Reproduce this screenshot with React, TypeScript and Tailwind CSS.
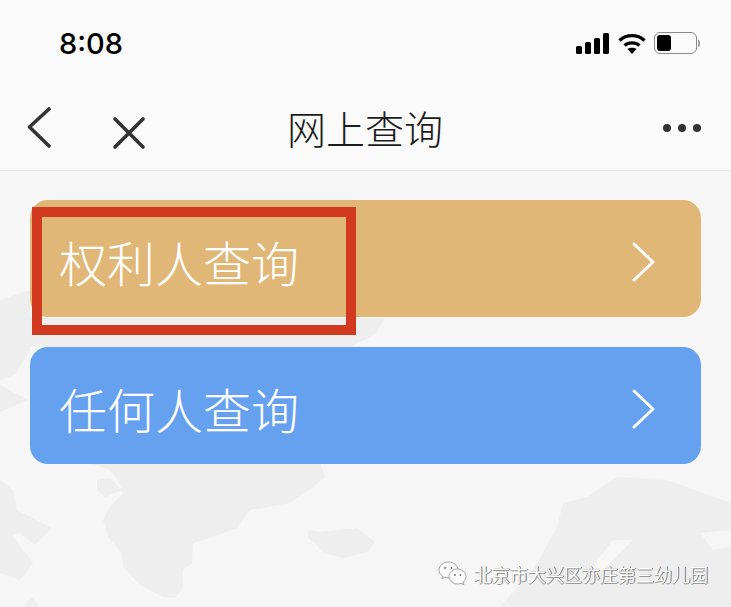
const font = { fontFamily: '"Noto Sans CJK SC", sans-serif' }

function Chevron() {
  return (
    <svg className="mt-[6px]" width="26" height="40" viewBox="0 0 26 40" fill="none" stroke="#ffffff" strokeWidth="3" strokeLinecap="round" strokeLinejoin="round">
      <path d="M3 2 L22 20 L3 38" />
    </svg>
  )
}

function QueryButton({ label, color }: { label: string; color: string }) {
  return (
    <div className={`flex h-[117px] items-center justify-between rounded-[18px] pl-[29px] pr-[44px] ${color}`}>
      <span className="mt-[4px] text-[48px] leading-none font-light text-white">{label}</span>
      <Chevron />
    </div>
  )
}

export default function App() {
  return (
    <div className="relative h-[607px] w-[731px] overflow-hidden bg-[#f6f6f7]" style={font}>
      {/* faint world map behind everything */}
      <svg className="absolute inset-0 blur-[0.6px]" width="731" height="607" viewBox="0 0 731 607" fill="#eeeeef" fillRule="evenodd">
        <path d="M90 463 L320 463 L325 477 L313 487 L290 503 L250 510 L237 528 L213 537 L193 543 L192 563 L183 570 L182 590 L175 598 L163 597 L140 585 L123 567 L122 553 L108 537 L103 520 L110 507 L123 493 L118 480 L110 470 Z" />
        <path d="M97 480 L110 478 L122 490 L105 497 L97 490 Z" />
        <path d="M308 530 L320 532 L358 528 L375 542 L367 552 L343 558 L323 553 L315 543 L308 538 Z" />
        <path d="M0 480 L13 490 L17 510 L52 528 L35 545 L20 533 L12 535 L33 563 L20 580 L0 573 Z" />
        <path d="M23 607 L32 597 L40 607 Z" />
        <path d="M500 607 L533 570 L557 527 L563 503 L587 497 L617 477 L667 480 L731 503 L731 530 L700 533 L713 550 L731 547 L731 607 Z M613 540 L633 540 L600 573 L590 570 Z" />
        <path d="M30 318 L385 318 L375 335 L350 347 L30 347 Z" />
        <path d="M0 300 L30 290 L30 350 L15 375 L0 380 Z" />
        <path d="M0 385 L28 400 L0 412 Z" />
      </svg>

      <div className="relative">
        <header className="h-[171px] border-b border-[#e6e6e6] bg-[#fafafa]">
          <div className="flex h-[86px] items-center justify-between pr-[31px] pl-[59px]">
            <span className="mt-[2px] text-[29px] font-medium text-black" style={{ fontFamily: "Inter, sans-serif" }}>8:08</span>
            <div className="flex items-center gap-[8.5px]">
              <svg width="33" height="21" viewBox="0 0 33 21" fill="#000000">
                <rect x="0" y="13" width="6" height="8" rx="1.5" />
                <rect x="9" y="9" width="6" height="12" rx="1.5" />
                <rect x="18" y="5" width="6" height="16" rx="1.5" />
                <rect x="27" y="0" width="6" height="21" rx="1.5" />
              </svg>
              <svg width="28" height="21" viewBox="0 0 28 21" fill="none" stroke="#000000" strokeWidth="3.4">
                <path d="M1.5 7.5 C8.5 1 19.5 1 26.5 7.5" />
                <path d="M6.5 12.5 C10.5 9 17.5 9 21.5 12.5" />
                <path d="M14 21 L9.5 16 C12 14.2 16 14.2 18.5 16 Z" fill="#000000" stroke="none" />
              </svg>
              <div className="flex items-center gap-[1px]">
                <div className="flex h-[22px] w-[43px] items-center rounded-[6px] border border-[#8a8a8a] p-[2px]">
                  <div className="h-full w-[14px] rounded-[3px] bg-black" />
                </div>
                <div className="h-[7px] w-[2px] rounded-r-sm bg-[#a0a0a0]" />
              </div>
            </div>
          </div>

          <div className="relative flex h-[84px] items-center justify-between pr-[30px] pl-[26px]">
            <div className="flex items-center gap-[60px]">
              <svg width="26" height="42" viewBox="0 0 26 42" fill="none" stroke="#333333" strokeWidth="3.6" strokeLinecap="round" strokeLinejoin="round">
                <path d="M23 2 L3.5 20 L23 39" />
              </svg>
              <svg className="mt-[10px]" width="34" height="34" viewBox="0 0 34 34" fill="none" stroke="#333333" strokeWidth="3.6" strokeLinecap="round">
                <path d="M3 3 L31 31 M31 3 L3 31" />
              </svg>
            </div>
            <span className="absolute left-[287px] -mt-[2px] text-[39px] leading-none font-light text-[#1c1c1c]">网上查询</span>
            <div className="flex gap-[7px]">
              <div className="size-[8px] rounded-full bg-[#333333]" />
              <div className="size-[8px] rounded-full bg-[#333333]" />
              <div className="size-[8px] rounded-full bg-[#333333]" />
            </div>
          </div>
        </header>

        <main className="flex flex-col gap-[30px] pt-[29px] pr-[30px] pl-[30px]">
          <QueryButton label="权利人查询" color="bg-[#e0b776]" />
          <QueryButton label="任何人查询" color="bg-[#66a1f0]" />
        </main>
      </div>

      {/* red annotation box drawn over the screenshot */}
      <div className="absolute top-[207px] left-[32px] h-[128px] w-[324px] border-[10px] border-[#d13a1e]" />

      {/* watermark */}
      <div className="absolute top-[561px] left-[438px] flex items-center gap-[7px]">
        <svg width="29" height="25" viewBox="0 0 29 25" fill="#ffffff" stroke="#8a8a8a" strokeWidth="0.8">
          <path d="M10.5 1 C5.5 1 1 4.5 1 9 C1 11.5 2.3 13.5 4.5 15 L3.8 17.5 L6.8 16.2 C8 16.7 9 16.9 10.5 17 C15.5 17 20 13.5 20 9 C20 4.5 15.5 1 10.5 1 Z" />
          <path d="M19.5 8 C15 8 11 11.2 11 15.5 C11 19.5 15 23 19.5 23 C20.8 23 21.8 22.8 23 22.3 L25.8 23.8 L25 21 C27 19.6 28 17.8 28 15.5 C28 11.2 24 8 19.5 8 Z" />
          <circle cx="7" cy="7" r="0.9" fill="#666666" stroke="none" />
          <circle cx="13.5" cy="7" r="0.9" fill="#666666" stroke="none" />
          <circle cx="17" cy="14" r="0.9" fill="#666666" stroke="none" />
          <circle cx="22.5" cy="14" r="0.9" fill="#666666" stroke="none" />
        </svg>
        <span className="text-[18px] leading-none whitespace-nowrap text-white [text-shadow:1px_0_0_#6f6f6f,0_1px_0_#999999]">北京市大兴区亦庄第三幼儿园</span>
      </div>
    </div>
  )
}
